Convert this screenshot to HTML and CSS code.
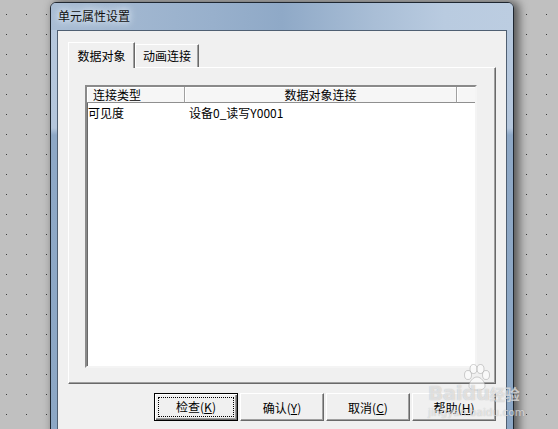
FILE: index.html
```html
<!DOCTYPE html>
<html lang="zh-CN">

<head>
    <meta charset="UTF-8">
    <meta name="viewport" content="width=device-width, initial-scale=1.0">
    <title>单元属性设置</title>
    <link rel="stylesheet" href="styles.css">
</head>

<body>
    <div class="desktop">
        <div class="window">
            <div class="titlebar">单元属性设置</div>
            <div class="client">
                <div class="tabs">
                    <div class="tab active">数据对象</div>
                    <div class="tab">动画连接</div>
                </div>
                <div class="panel">
                    <div class="list">
                        <div class="list-head">
                            <div class="cell type">连接类型</div>
                            <div class="cell link">数据对象连接</div>
                            <div class="cell rest"></div>
                        </div>
                        <div class="list-row">
                            <div class="cell type">可见度</div>
                            <div class="cell link">设备0_读写Y0001</div>
                        </div>
                    </div>
                </div>
                <div class="buttons">
                    <button class="btn default"><span>检查(<u>K</u>)</span></button>
                    <button class="btn"><span>确认(<u>Y</u>)</span></button>
                    <button class="btn"><span>取消(<u>C</u>)</span></button>
                    <button class="btn"><span>帮助(<u>H</u>)</span></button>
                </div>
            </div>
        </div>
        <!-- watermark over the corner -->
        <svg class="paw" width="30" height="28" viewBox="0 0 30 28">
            <ellipse cx="6" cy="11" rx="3.5" ry="4.5" />
            <ellipse cx="11.5" cy="5" rx="3.5" ry="4.5" />
            <ellipse cx="18.5" cy="5" rx="3.5" ry="4.5" />
            <ellipse cx="24" cy="11" rx="3.5" ry="4.5" />
            <path d="M15 13c-4 0-8 5-8 9 0 3 3 4 8 4s8-1 8-4c0-4-4-9-8-9z" />
        </svg>
        <div class="watermark">Baidu<span class="cn">经验</span><small>jingyan.baidu.com</small></div>
    </div>
</body>

</html>
```

FILE: styles.css
```css
body {
    margin: 0;
    font-family: "Noto Sans CJK SC", sans-serif;
    font-size: 12px;
    overflow: hidden;
}

.desktop {
    position: relative;
    width: 558px;
    height: 429px;
    overflow: hidden;
    background-color: #c0c0c0;
    background-image: conic-gradient(at 1px 1px, transparent 75%, #3c3c3c 0);
    background-size: 20px 20px;
    background-position: 6px 14px;
}

.window {
    position: absolute;
    left: 50px;
    top: 2px;
    width: 464px;
    height: 460px;
    box-sizing: border-box;
    border: 1px solid #1e2630;
    border-radius: 6px 6px 0 0;
    background: linear-gradient(to bottom, #b6c8dd 0, #b4c6dc 125px, #8ea8c6 132px, #8ca7c5 100%);
    box-shadow: 4px 0 10px 1px rgba(0, 0, 0, 0.55);
}

.titlebar {
    height: 27px;
    line-height: 26px;
    padding-left: 7px;
    border-radius: 5px 5px 0 0;
    color: #111;
    background: linear-gradient(90deg, #a9bdd4 0, #98b0cc 35%, #8fa9c7 50%, #a9bed6 70%, #b9cbe0 85%, #bccde1 100%);
    text-shadow: 0 0 6px #e8f0f8, 0 0 10px #e8f0f8;
}

.client {
    margin: 0 6px;
    height: 420px;
    border: 1px solid #4f5f72;
    background-color: #f0f0f0;
    padding: 11px 10px 0 10px;
}

.tabs {
    display: flex;
    align-items: flex-end;
    height: 25px;
}

.tab {
    box-sizing: border-box;
    height: 23px;
    width: 64px;
    line-height: 21px;
    text-align: center;
    border-top: 1px solid #fff;
    border-left: 1px solid #fff;
    border-right: 1px solid #696969;
    box-shadow: inset -1px 0 #a0a0a0;
    color: #000;
}

.tab.active {
    position: relative;
    height: 26px;
    width: 67px;
    margin-bottom: -1px;
    line-height: 25px;
    background-color: #f0f0f0;
    z-index: 1;
}

.panel {
    box-sizing: border-box;
    height: 317px;
    padding: 17px 18px 15px 16px;
    border: 1px solid;
    border-color: #fff #696969 #696969 #fff;
    box-shadow: inset -1px -1px #a0a0a0;
}

.list {
    box-sizing: border-box;
    height: 283px;
    background-color: #fff;
    border: 2px solid;
    border-color: #8a8a8a #f4f4f4 #f4f4f4 #8a8a8a;
    box-shadow: inset 1px 1px #696969;
}

.list-head {
    display: flex;
    height: 16px;
    line-height: 15px;
    background-color: #f6f6f6;
    color: #000;
}

.list-head .cell {
    box-sizing: border-box;
    border-right: 1px solid #a0a0a0;
    border-bottom: 1px solid #8f8f8f;
    box-shadow: inset 1px 1px #fff;
}

.cell.type {
    width: 98px;
    padding-left: 6px;
}

.cell.link {
    width: 272px;
    padding-left: 3px;
}

.list-head .cell.link {
    text-align: center;
    padding-left: 0;
}

.cell.rest {
    flex: 1;
    border-right: none;
}

.list-row {
    display: flex;
    height: 18px;
    line-height: 20px;
    color: #000;
}

.list-row .cell.type {
    padding-left: 1px;
}

.buttons {
    display: flex;
    justify-content: flex-end;
    gap: 2px;
    margin-top: 9px;
}

.btn {
    box-sizing: border-box;
    width: 84px;
    height: 28px;
    padding: 0;
    font-family: "Noto Sans CJK SC", sans-serif;
    font-size: 12px;
    color: #000;
    background-color: #f0f0f0;
    border: 1px solid;
    border-color: #fff #696969 #696969 #fff;
    box-shadow: inset -1px -1px #a0a0a0;
}

.btn u {
    text-decoration: underline;
}

.btn.default {
    border: 1px solid #000;
    box-shadow: inset 1px 1px #fff, inset -1px -1px #696969, inset -2px -2px #a0a0a0;
}

.btn.default span {
    display: block;
    margin: 0 3px;
    line-height: 18px;
    border: 1px dotted #000;
}

.paw {
    position: absolute;
    left: 462px;
    top: 364px;
    fill: rgba(255, 255, 255, 0.6);
    stroke: rgba(150, 150, 150, 0.45);
    stroke-width: 1;
}

.watermark {
    position: absolute;
    left: 428px;
    top: 381px;
    font-family: "DejaVu Sans", "Noto Sans CJK SC", sans-serif;
    font-size: 20px;
    font-weight: bold;
    line-height: 24px;
    letter-spacing: -0.5px;
    color: rgba(255, 255, 255, 0.6);
    text-shadow: 0 0 1px rgba(120, 120, 120, 0.55);
}

.watermark .cn {
    font-family: "Noto Sans CJK SC", sans-serif;
    font-size: 15px;
    letter-spacing: 0;
}

.watermark small {
    display: block;
    font-size: 10.5px;
    font-weight: normal;
    line-height: 12px;
    letter-spacing: 0;
}
```
